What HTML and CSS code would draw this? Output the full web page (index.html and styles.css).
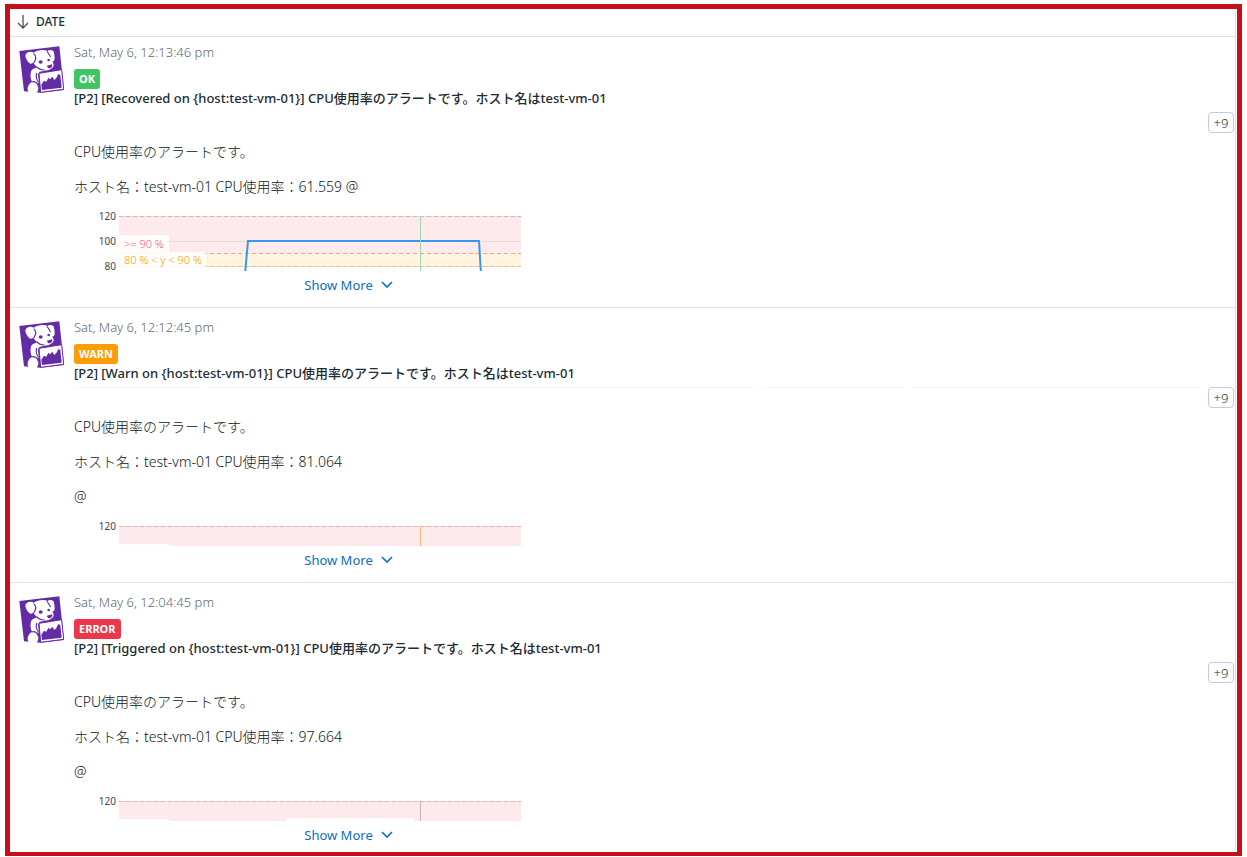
FILE: index.html
```
<!DOCTYPE html>
<html lang="ja">
<head>
    <meta charset="UTF-8">
    <meta name="viewport" content="width=device-width, initial-scale=1.0">
    <title>Events</title>
    <link rel="stylesheet" href="styles.css">
</head>
<body>
    <!-- Shared icons -->
    <svg class="sprite" aria-hidden="true">
        <symbol id="dog" viewBox="57 137 138 147">
            <path fill="#632ca6" d="M58 152 178 138 185 204 192 269 122 277 72 273z"/>
            <path fill="#fff" d="M76 166C77 157 91 151 101 157C112 149 132 147 142 152C150 146 162 149 162 157C164 168 166 181 160 183C155 183 152 174 151 168C153 176 161 186 161 195C160 203 151 207 146 209L119 214 114 222 117 249 108 246C116 254 118 266 111 276C104 284 88 282 84 271C80 260 88 249 96 244C90 232 90 216 96 208C103 204 108 203 111 200C105 196 102 191 101 186C97 191 91 192 87 187C81 181 77 174 76 166z"/>
            <g fill="none" stroke="#632ca6" stroke-width="3.5">
                <path d="M101 160C108 166 109 176 102 187"/>
                <path d="M141 153C145 158 148 164 152 170"/>
                <path d="M110 199C115 206 124 209 134 209"/>
                <path d="M94 245C105 241 114 248 115 258"/>
                <path d="M110 218C107 227 110 238 116 246"/>
            </g>
            <ellipse fill="#632ca6" cx="122" cy="185" rx="6" ry="5"/>
            <ellipse fill="#632ca6" cx="146" cy="179" rx="4" ry="4"/>
            <path fill="#632ca6" d="M141 196 156 192C159 197 154 203 149 204C145 204 141 201 141 196z"/>
            <path fill="#fff" stroke="#632ca6" stroke-width="3" d="M117 219 185 208 191 267 122 276z"/>
            <path fill="#632ca6" d="M124 253 132 241 139 244 145 232 150 237 157 229 163 239 169 233 175 221 181 224 185 262 126 269z"/>
        </symbol>
        <symbol id="chevron" viewBox="0 0 12 8">
            <path d="M1 1l5 5 5-5" fill="none" stroke="#0e6cc4" stroke-width="1.6"/>
        </symbol>
    </svg>

    <main class="frame">
        <div class="stream">
            <div class="sort-bar">
                <button class="sort-btn" type="button">
                    <svg width="12" height="14" viewBox="0 0 12 14"><path d="M6 0v13M1 8l5 5 5-5" fill="none" stroke="#4a4f5c" stroke-width="1.3"/></svg>
                    DATE
                </button>
            </div>

            <!-- Recovered -->
            <article class="event">
                <svg class="avatar"><use href="#dog"/></svg>
                <div class="main">
                    <time class="date">Sat, May 6, 12:13:46 pm</time>
                    <span class="badge ok">OK</span>
                    <h2 class="title">[P2] [Recovered on {host:test-vm-01}] CPU使用率のアラートです。ホスト名はtest-vm-01</h2>
                    <div class="tags">
                        <button class="more-tags" type="button">+9</button>
                    </div>
                    <div class="body">
                        <p>CPU使用率のアラートです。</p>
                        <p>ホスト名：test-vm-01 CPU使用率：61.559 @</p>
                        <svg class="chart" width="450" height="110">
                            <rect class="zone-alert" x="45" y="14" width="402" height="37"/>
                            <rect class="zone-warn" x="45" y="51" width="402" height="13"/>
                            <path class="grid" d="M45 14.5h402M45 39.5h402M45 64.5h402"/>
                            <path class="limit" d="M45 14.5h402"/>
                            <path class="limit alert" d="M45 51.5h402"/>
                            <path class="limit warn" d="M45 64.5h402"/>
                            <path class="series" d="M171 72L174 39H405L407 72"/>
                            <path class="marker-ok" d="M346.5 14v60"/>
                            <rect class="label-bg" x="45" y="33" width="50" height="17"/>
                            <rect class="label-bg" x="45" y="50" width="87" height="16"/>
                            <text class="label-alert" x="50" y="46">&gt;= 90 %</text>
                            <text class="label-warn" x="50" y="62">80 % &lt; y &lt; 90 %</text>
                            <text class="tick" x="42" y="18">120</text>
                            <text class="tick" x="42" y="43">100</text>
                            <text class="tick" x="42" y="68">80</text>
                        </svg>
                    </div>
                    <button class="show-more" type="button">Show More <svg width="12" height="8"><use href="#chevron"/></svg></button>
                </div>
            </article>

            <!-- Warn -->
            <article class="event">
                <svg class="avatar"><use href="#dog"/></svg>
                <div class="main">
                    <time class="date">Sat, May 6, 12:12:45 pm</time>
                    <span class="badge warning">WARN</span>
                    <h2 class="title">[P2] [Warn on {host:test-vm-01}] CPU使用率のアラートです。ホスト名はtest-vm-01</h2>
                    <div class="tags">
                        <div class="tag-edges"><i></i><i></i><i></i><i></i></div>
                        <button class="more-tags" type="button">+9</button>
                    </div>
                    <div class="body">
                        <p>CPU使用率のアラートです。</p>
                        <p>ホスト名：test-vm-01 CPU使用率：81.064</p>
                        <p>@</p>
                        <svg class="chart" width="450" height="110">
                            <rect class="zone-alert" x="45" y="14" width="402" height="37"/>
                            <path class="grid" d="M45 14.5h402"/>
                            <path class="limit" d="M45 14.5h402"/>
                            <path class="marker-warn" d="M346.5 14v60"/>
                            <rect class="label-bg" x="45" y="32" width="50" height="17"/>
                            <text class="tick" x="42" y="18">120</text>
                        </svg>
                    </div>
                    <button class="show-more" type="button">Show More <svg width="12" height="8"><use href="#chevron"/></svg></button>
                </div>
            </article>

            <!-- Triggered -->
            <article class="event">
                <svg class="avatar"><use href="#dog"/></svg>
                <div class="main">
                    <time class="date">Sat, May 6, 12:04:45 pm</time>
                    <span class="badge error">ERROR</span>
                    <h2 class="title">[P2] [Triggered on {host:test-vm-01}] CPU使用率のアラートです。ホスト名はtest-vm-01</h2>
                    <div class="tags">
                        <button class="more-tags" type="button">+9</button>
                    </div>
                    <div class="body">
                        <p>CPU使用率のアラートです。</p>
                        <p>ホスト名：test-vm-01 CPU使用率：97.664</p>
                        <p>@</p>
                        <svg class="chart" width="450" height="110">
                            <rect class="zone-alert" x="45" y="14" width="402" height="37"/>
                            <path class="grid" d="M45 14.5h402"/>
                            <path class="limit" d="M45 14.5h402"/>
                            <path class="marker-error" d="M346.5 14v60"/>
                            <rect class="label-bg" x="45" y="32" width="50" height="17"/>
                            <rect class="label-bg" x="212" y="31" width="128" height="17"/>
                            <text class="tick" x="42" y="18">120</text>
                        </svg>
                    </div>
                    <button class="show-more" type="button">Show More <svg width="12" height="8"><use href="#chevron"/></svg></button>
                </div>
            </article>
        </div>
    </main>
</body>
</html>
```
FILE: styles.css
```
* {
    box-sizing: border-box;
}

body {
    margin: 0;
    padding: 4px 5px 0;
    background: #fff;
    color: #1c2b34;
    font-family: "Noto Sans", "Noto Sans CJK JP", sans-serif;
    font-size: 13px;
    line-height: 20px;
}

button {
    font-family: inherit;
    font-size: 13px;
    line-height: 20px;
    background: none;
    border: none;
    padding: 0;
    cursor: pointer;
}

.sprite {
    display: none;
}

.frame {
    border: 5px solid #c70f19;
    border-bottom-width: 4px;
    padding-right: 1px;
}

.stream {
    border-right: 1px solid #dcdfea;
}

.sort-bar {
    height: 28px;
    padding: 0 7px 2px;
    display: flex;
    align-items: center;
    border-bottom: 1px solid #dcdfea;
}

.sort-btn {
    display: flex;
    align-items: center;
    gap: 7px;
    color: #1c2b34;
    font-size: 12px;
    font-weight: 500;
}

.event {
    display: flex;
    gap: 9px;
    padding: 9px 1px 12px 9px;
    border-bottom: 1px solid #e1e2ea;
}

.sort-bar + .event {
    padding-top: 5px;
}

.event:last-child {
    padding-bottom: 7px;
    border-bottom: none;
}

.avatar {
    flex: none;
    width: 46px;
    height: 49px;
    margin-top: 4px;
}

.main {
    flex: 1;
    min-width: 0;
}

.date {
    display: block;
    color: #606970;
    font-weight: 300;
    margin-bottom: 7px;
}

.badge {
    display: block;
    width: fit-content;
    padding: 0 5px;
    border-radius: 3px;
    color: #fff;
    font-size: 11px;
    font-weight: 700;
}

.ok {
    background: #41c464;
}

.warning {
    background: #fb9d06;
}

.error {
    background: #eb364b;
}

.title {
    margin: 0;
    font-size: 13px;
    line-height: 18px;
    font-weight: 500;
}

.tags {
    display: flex;
    justify-content: flex-end;
    align-items: flex-start;
    height: 35px;
    padding-top: 5px;
}

.tag-edges {
    flex: 1;
    display: flex;
    gap: 8px;
    padding: 0 8px 0 2px;
}

.tag-edges i {
    height: 1px;
    flex: 288;
    background: #f5f5f5;
}

.tag-edges i:nth-child(1) {
    flex: 124;
}

.tag-edges i:nth-child(2) {
    flex: 546;
}

.tag-edges i:nth-child(3) {
    flex: 142;
}

.more-tags {
    width: 26px;
    height: 21px;
    border: 1px solid #c3c9e0;
    border-radius: 4px;
    color: #1c2b34;
    font-weight: 300;
    line-height: 18px;
}

/* collapsed message, cut off above Show More */
.body {
    max-height: 129px;
    overflow: hidden;
    color: #0c161c;
    font-size: 14px;
    font-weight: 300;
}

.body p {
    margin: 0;
}

.body p + p {
    margin-top: 15px;
}

.chart {
    display: block;
    margin-top: 5px;
    font-size: 10px;
    font-weight: 400;
}

.zone-alert {
    fill: #fdeaec;
}

.zone-warn {
    fill: #fff4e0;
}

.grid {
    stroke: #e8d9dd;
}

.limit {
    stroke: #f0a9b0;
    stroke-dasharray: 4 3;
}

.limit.alert {
    stroke: #fb9f8b;
}

.limit.warn {
    stroke: #f3bd8c;
}

.series {
    fill: none;
    stroke: #3598ec;
    stroke-width: 2;
}

.marker-ok {
    stroke: #a5d3a8;
}

.marker-warn {
    stroke: #fcbc78;
}

.marker-error {
    stroke: #c9b1b5;
}

.label-bg {
    fill: #fff;
    fill-opacity: 0.85;
}

.label-alert,
.label-warn {
    font-size: 11px;
    font-weight: 300;
}

.label-alert {
    fill: #f2606f;
}

.label-warn {
    fill: #f0a000;
}

.tick {
    fill: #3f4650;
    text-anchor: end;
}

.show-more {
    display: flex;
    justify-content: center;
    align-items: center;
    gap: 8px;
    width: 100%;
    max-width: 549px;
    margin-top: 4px;
    color: #0e6cc4;
}
```
